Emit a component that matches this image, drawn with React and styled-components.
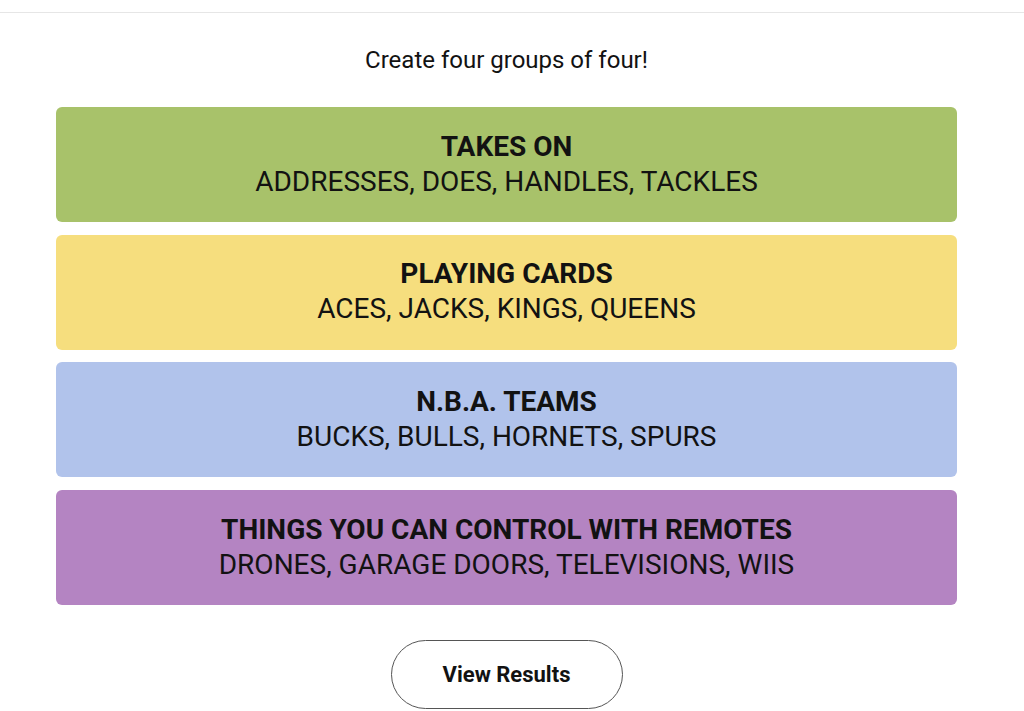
import React from "react";
import styled, { createGlobalStyle } from "styled-components";

const Global = createGlobalStyle`
  html, body { margin: 0; padding: 0; background: #fff; }
  body { font-family: "Roboto", "Liberation Sans", sans-serif; color: #121212; }
`;

const Page = styled.div`
  border-top: 1px solid #e6e6e6;
  margin-top: 12px;
  padding-right: 11px;
  display: flex;
  flex-direction: column;
  align-items: center;
`;

const Prompt = styled.p`
  margin: 32px 0 0;
  font-family: "Roboto", sans-serif;
  font-size: 24px;
  line-height: 30px;
  font-weight: 400;
`;

const Board = styled.div`
  margin-top: 32px;
  width: 901px;
  display: flex;
  flex-direction: column;
  gap: 12.7px;
`;

const Group = styled.div`
  height: 115px;
  border-radius: 6px;
  background: ${(p) => p.$color};
  display: flex;
  flex-direction: column;
  align-items: center;
  justify-content: center;
  text-align: center;
  padding-bottom: 2px;
  box-sizing: border-box;
`;

const Title = styled.div`
  font-family: "Roboto", sans-serif;
  font-weight: 700;
  font-size: 28px;
  line-height: 35px;
`;

const Members = styled.div`
  font-family: "Roboto", sans-serif;
  font-weight: 400;
  font-size: 28px;
  line-height: 35px;
`;

const Button = styled.button`
  margin-top: 35px;
  width: 232px;
  height: 69px;
  border-radius: 35px;
  border: 1px solid #555;
  background: #fff;
  font-family: "Roboto", sans-serif;
  font-weight: 700;
  font-size: 22px;
  color: #121212;
  cursor: pointer;
`;

const groups = [
  { title: "TAKES ON", members: "ADDRESSES, DOES, HANDLES, TACKLES", color: "#a8c26a" },
  { title: "PLAYING CARDS", members: "ACES, JACKS, KINGS, QUEENS", color: "#f6de7e" },
  { title: "N.B.A. TEAMS", members: "BUCKS, BULLS, HORNETS, SPURS", color: "#b1c3eb" },
  { title: "THINGS YOU CAN CONTROL WITH REMOTES", members: "DRONES, GARAGE DOORS, TELEVISIONS, WIIS", color: "#b484c2" },
];

export default function App() {
  return (
    <>
      <Global />
      <Page>
        <Prompt>Create four groups of four!</Prompt>
        <Board>
          {groups.map((g) => (
            <Group key={g.title} $color={g.color}>
              <Title>{g.title}</Title>
              <Members>{g.members}</Members>
            </Group>
          ))}
        </Board>
        <Button>View Results</Button>
      </Page>
    </>
  );
}
